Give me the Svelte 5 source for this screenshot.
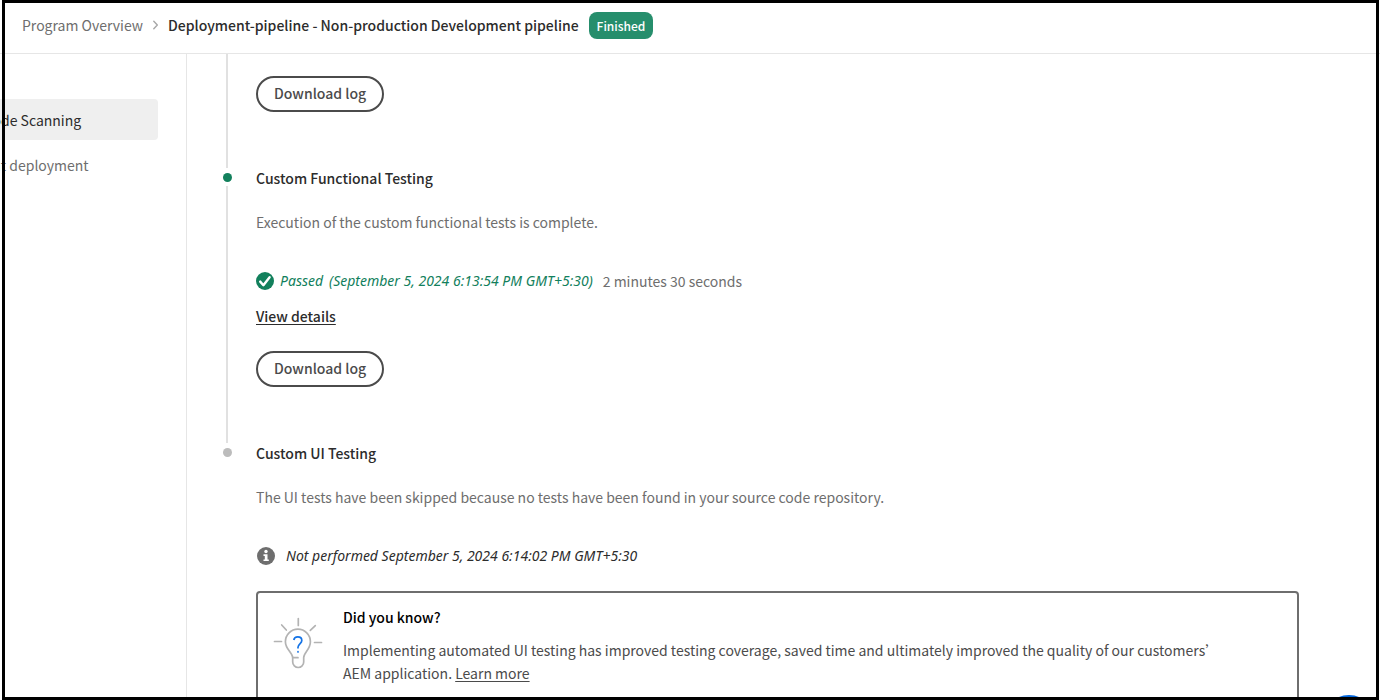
<script>
  const stages = [
    { label: 'Build and Code Scanning', current: true },
    { label: 'Development deployment', current: false }
  ];
</script>

<div class="app">
  <header>
    <nav class="crumbs" aria-label="Breadcrumb">
      <a href="#overview">Program Overview</a>
      <svg class="chevron" width="5" height="10" viewBox="0 0 5 10" aria-hidden="true">
        <path d="M0.800 1.200l3.500 3.800-3.500 3.800" fill="none" stroke="#a8a8a8" stroke-width="1.400" stroke-linecap="round" stroke-linejoin="round" />
      </svg>
      <h1>Deployment-pipeline - Non-production Development pipeline</h1>
    </nav>
    <span class="badge">Finished</span>
  </header>

  <div class="body">
    <nav class="side" aria-label="Stages">
      {#each stages as stage}
        <a href="#stage" class:current={stage.current}>{stage.label}</a>
      {/each}
    </nav>

    <main>
      <section class="step first">
        <div class="rail"><span class="line"></span></div>
        <div class="content">
          <button class="log">Download log</button>
        </div>
      </section>

      <section class="step">
        <div class="rail"><span class="dot done"></span><span class="line"></span></div>
        <div class="content">
          <h2>Custom Functional Testing</h2>
          <p class="desc">Execution of the custom functional tests is complete.</p>
          <div class="status passed">
            <svg width="18" height="18" viewBox="0 0 18 18" aria-hidden="true">
              <circle cx="9" cy="9" r="9" fill="#12805c" />
              <path d="M4.200 9.600l3.200 3.600 6.200-8" fill="none" stroke="#fff" stroke-width="2.400" stroke-linecap="round" stroke-linejoin="round" />
            </svg>
            <em>Passed</em>
            <em class="time">(September 5, 2024 6:13:54 PM GMT+5:30)</em>
            <span class="duration">2 minutes 30 seconds</span>
          </div>
          <a class="details" href="#details">View details</a>
          <button class="log">Download log</button>
        </div>
      </section>

      <section class="step">
        <div class="rail"><span class="dot"></span></div>
        <div class="content">
          <h2>Custom UI Testing</h2>
          <p class="desc">The UI tests have been skipped because no tests have been found in your source code repository.</p>
          <div class="status skipped">
            <svg width="20" height="20" viewBox="0 0 20 20" aria-hidden="true">
              <circle cx="10" cy="10" r="9" fill="#6e6e6e" />
              <circle cx="10" cy="5.500" r="1.700" fill="#fff" />
              <path d="M7.500 8.200h4v5.200h1.300v1.700H7.500v-1.700h1.300V9.900H7.500z" fill="#fff" />
            </svg>
            <em>Not performed September 5, 2024 6:14:02 PM GMT+5:30</em>
          </div>
          <aside class="tip">
            <svg width="52" height="54" viewBox="0 0 52 54" fill="none" stroke="#b3b3b3" stroke-width="1.700" stroke-linecap="round" stroke-linejoin="round" aria-hidden="true">
              <path d="M20.700 41.500c0-5-7.300-8-7.300-15.800a12.500 12.500 0 0 1 25 0c0 7.800-6.700 10.800-6.700 15.800V46a5.500 5.500 0 0 1-11 0z" />
              <path d="M20.700 41.700H26M26.300 2.500v7M2.500 25.500h7M42.500 26.500h7M9.700 9l4.600 5M43.300 9.700l-5 4.600" />
              <g stroke="#1473e6">
                <path d="M21.800 24c.3-2 1.900-3.200 4-3.200 2.300 0 4 1.400 4 3.600 0 3.200-3.800 3.600-3.800 6.800v1.300" stroke-linecap="butt" />
                <path d="M26 35.700v.2" />
              </g>
            </svg>
            <div>
              <h3>Did you know?</h3>
              <p>
                Implementing automated UI testing has improved testing coverage, saved time and ultimately improved the quality of our customers’ AEM application. <a href="#learn">Learn more</a>
              </p>
            </div>
          </aside>
        </div>
      </section>
    </main>
  </div>

  <button class="help" aria-label="Help"></button>
  <div class="frame"></div>
</div>

<style>
  :global(body) {
    margin: 0;
    background: #fff;
  }
  .app {
    height: 100vh;
    overflow: hidden;
    display: flex;
    flex-direction: column;
    font: 14px/20px 'Noto Sans CJK SC', 'Noto Sans', sans-serif;
    color: #2c2c2c;
  }
  h1, h2, h3, p {
    margin: 0;
    font-size: inherit;
    font-weight: 500;
  }
  svg {
    flex: none;
  }
  header {
    flex: none;
    display: flex;
    align-items: center;
    gap: 10px;
    padding: 12px 22px 14px;
    border-bottom: 1px solid #e6e6e6;
  }
  .crumbs {
    display: flex;
    align-items: center;
    gap: 10px;
    padding-bottom: 2px;
    white-space: nowrap;
  }
  .crumbs a {
    color: #6e6e6e;
    text-decoration: none;
  }
  .badge {
    padding: 4px 8px 3px;
    border-radius: 8px;
    background: #268e6c;
    color: #fff;
    font-size: 12px;
    font-weight: 500;
  }
  .body {
    flex: 1;
    min-height: 0;
    display: flex;
  }
  .side {
    flex: none;
    box-sizing: border-box;
    width: 187px;
    padding: 45px 28px 0 0;
    border-right: 1px solid #e6e6e6;
    display: flex;
    flex-direction: column;
    gap: 4px;
  }
  .side a {
    margin-left: -102px;
    padding: 11px 20px 10px;
    border-radius: 4px;
    color: #6e6e6e;
    text-decoration: none;
    white-space: nowrap;
  }
  .side a.current {
    background: #efefef;
    color: #2c2c2c;
  }
  main {
    flex: 1;
    min-width: 0;
    padding: 0 81px 0 36px;
  }
  .step {
    display: flex;
    gap: 24px;
  }
  .rail {
    flex: none;
    width: 9px;
    padding-top: 5px;
    display: flex;
    flex-direction: column;
    gap: 4px;
  }
  .dot {
    height: 9px;
    border-radius: 50%;
    background: #bcbcbc;
  }
  .dot.done {
    background: #12805c;
  }
  .line {
    flex: 1;
    width: 2px;
    margin-left: 3px;
    background: #e1e1e1;
  }
  .content {
    flex: 1;
    min-width: 0;
    padding-bottom: 56px;
    display: flex;
    flex-direction: column;
    align-items: flex-start;
  }
  .first .rail {
    padding-top: 0;
  }
  .first .content {
    padding-top: 22px;
  }
  .desc {
    margin-top: 24px;
    color: #6e6e6e;
    font-weight: 400;
  }
  .status {
    margin-top: 39px;
    display: flex;
    align-items: center;
    gap: 6px;
  }
  .status em {
    font-family: 'Noto Sans', sans-serif;
  }
  .skipped {
    gap: 10px;
  }
  .passed {
    color: #12805c;
  }
  .duration {
    margin-left: 4px;
    color: #6e6e6e;
  }
  .details {
    margin-top: 15px;
    color: #2c2c2c;
    font-weight: 500;
    text-underline-offset: 2px;
  }
  .log {
    padding: 5px 16px 7px;
    border: 2px solid #4b4b4b;
    border-radius: 18px;
    background: #fff;
    color: #4b4b4b;
    font: inherit;
    font-weight: 500;
  }
  .details + .log {
    margin-top: 25px;
  }
  .tip {
    align-self: stretch;
    margin-top: 25px;
    padding: 14px 64px 24px 14px;
    border: 2px solid #6e6e6e;
    border-radius: 4px;
    display: flex;
    align-items: flex-start;
    gap: 19px;
  }
  .tip svg {
    margin-top: 9px;
  }
  .tip h3 {
    color: #000;
  }
  .tip p {
    margin-top: 12px;
    color: #4b4b4b;
    font-weight: 400;
    line-height: 23px;
  }
  .tip a {
    color: inherit;
    text-underline-offset: 2px;
  }
  .help {
    position: fixed;
    right: 3px;
    bottom: -51px;
    width: 56px;
    height: 56px;
    border: 0;
    border-radius: 50%;
    background: #0265dc;
  }
  .frame {
    position: fixed;
    inset: 0 1px 0 2px;
    border: 3px solid #000;
    pointer-events: none;
  }
</style>
